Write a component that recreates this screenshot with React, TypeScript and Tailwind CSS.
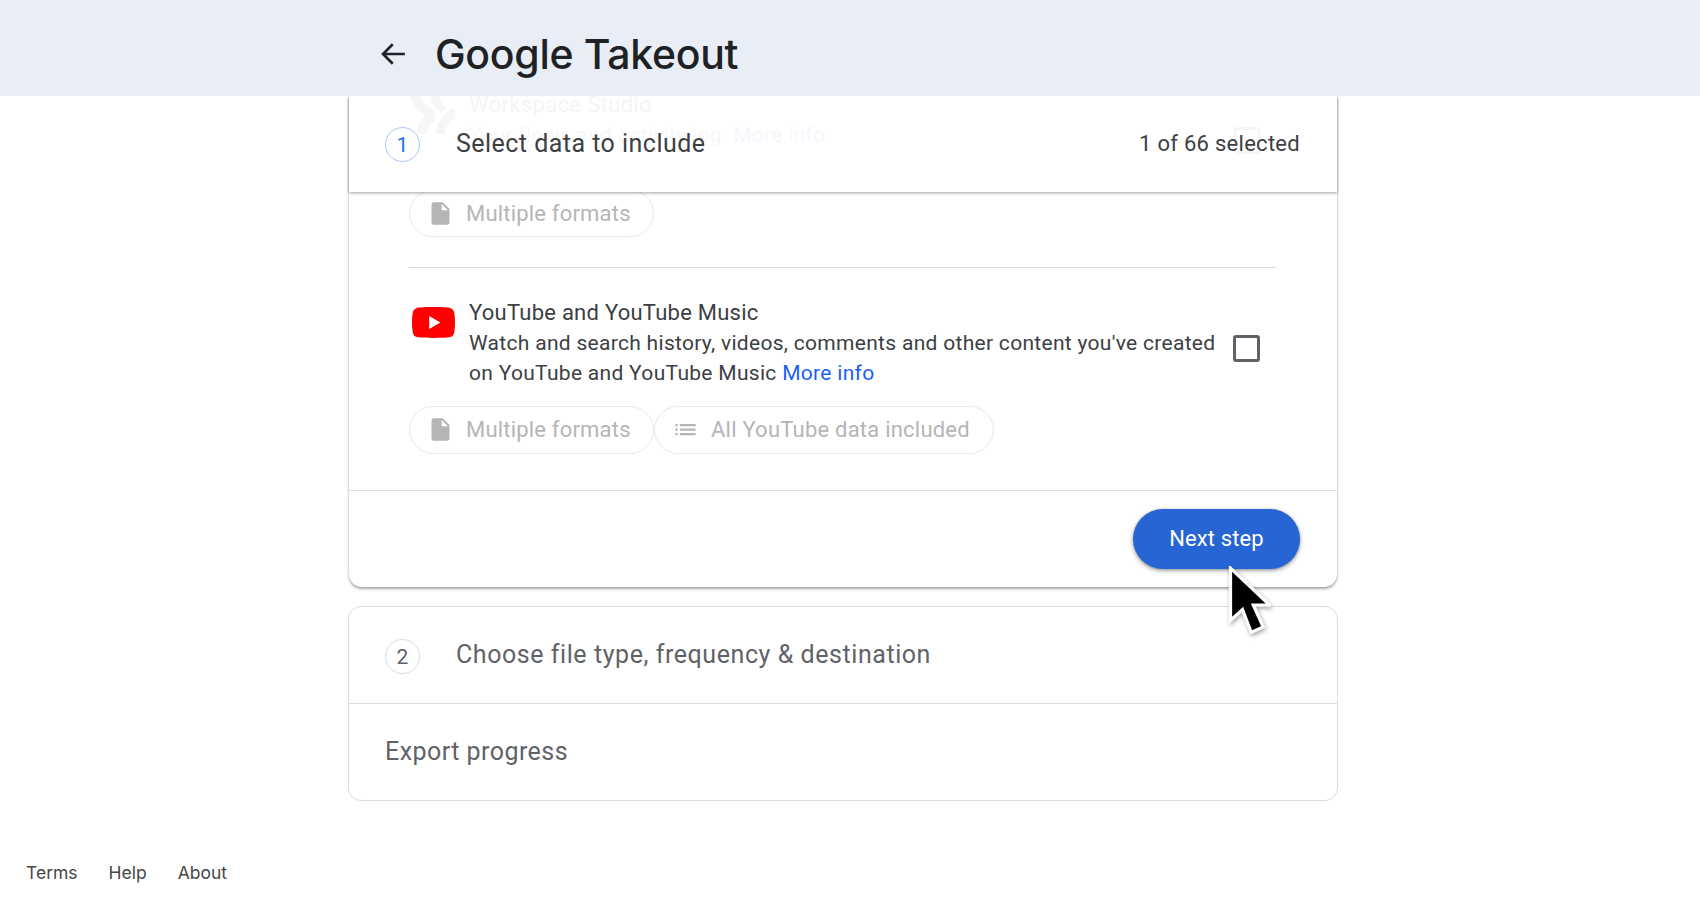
const FileIcon = () => (
  <svg viewBox="0 0 24 24" className="w-[27px] h-[27px] shrink-0" fill="#b4b5b7">
    <path d="M6 2c-1.1 0-1.99.9-1.99 2L4 20c0 1.1.89 2 1.99 2H18c1.1 0 2-.9 2-2V8l-6-6H6zm7 7V3.5L18.5 9H13z" />
  </svg>
);

const ListIcon = () => (
  <svg viewBox="0 0 24 24" className="w-[27px] h-[27px] shrink-0" fill="#b4b5b7">
    <path d="M3 13h2v-2H3v2zm0 4h2v-2H3v2zm0-8h2V7H3v2zm4 4h14v-2H7v2zm0 4h14v-2H7v2zM7 7v2h14V7H7z" />
  </svg>
);

export default function App() {
  return (
    <div className="min-h-[900px] bg-white font-['Roboto',sans-serif] relative overflow-hidden">
      <header className="h-24 bg-[#e8edf6] flex items-center pl-[378px] pt-3 relative z-20">
        <svg viewBox="0 0 24 24" className="w-[30px] h-[30px]" fill="none" stroke="#202124" strokeWidth="2.1">
          <path d="M21.500 12H4M11.800 4.200 4 12l7.800 7.800" />
        </svg>
        <h1 className="ml-[27px] text-[41px] leading-none font-['Inter',sans-serif] font-medium tracking-[-0.3px] text-[#202124]">Google Takeout</h1>
      </header>

      <main className="ml-[349px] w-[988px]">
        <section className="rounded-b-[13px] bg-white shadow-[0_2px_3px_rgba(60,64,67,0.4),0_1px_2px_rgba(60,64,67,0.15)]">
          <div className="relative z-10 h-24 flex items-center pl-[36px] pr-[37px] bg-white overflow-hidden shadow-[0_1px_3px_rgba(60,64,67,0.5)]">
            <div className="absolute left-[61px] top-0">
              <svg viewBox="0 0 45 38" className="w-[45px] h-[38px]" fill="#f6f6f6">
                <path d="M0 0h10c1 6 6 11 15 14l-5 7C9 18 2 10 0 0z" />
                <path d="M21 0h9c0 5 2 8 7 11l-6 6C25 13 21 7 21 0z" />
                <path d="M6 38C7 27 13 19 25 17l0 9c-5 1-7 5-8 12z" />
                <path d="M26 38C27 25 33 16 45 12l0 10c-6 2-9 8-10 16z" />
              </svg>
            </div>
            <div className="absolute left-[120px] top-[-1px] text-[22px] leading-[20px] tracking-[0.35px] text-[#f5f5f5] whitespace-nowrap">Workspace Studio</div>
            <div className="absolute left-[120px] top-[24px] text-[21px] leading-[30px] tracking-[0.3px] text-[#f7f7f7] whitespace-nowrap">Your flows and activity log. <span className="text-[#f5f7fe]">More info</span></div>
            <div className="absolute left-[885px] top-[31px] w-[27px] h-[27px] rounded-[3px] border-[3px] border-[#f6f6f6]" />
            <span className="relative w-[35px] h-[35px] rounded-full border border-[#a8c7fa] flex items-center justify-center text-[#1a73e8] text-[21px] pt-[4px]">1</span>
            <span className="relative ml-[36px] text-[25px] leading-[30px] tracking-[0.47px] text-[#3c4043]">Select data to include</span>
            <span className="relative ml-auto text-[22px] leading-[30px] tracking-[0.28px] text-[#3c4043]">1 of 66 selected</span>
          </div>

          <div className="-mt-[2px] pl-[60px] pr-[61px]">
            <div className="pb-[30px] border-b border-[#dadce0]">
              <span className="inline-flex items-center h-[47px] w-[245px] rounded-full border border-[#e8e9eb] pl-[17px] pb-[1px] gap-[12px] text-[22px] tracking-[0.2px] text-[#b4b5b7]">
                <FileIcon />
                Multiple formats
              </span>
            </div>

            <div className="flex mt-[30px]">
              <svg viewBox="0 0 24 18" preserveAspectRatio="none" className="w-[43px] h-[33px] ml-[3px] mt-[8px] shrink-0">
                <path fill="#ff0000" d="M23.5 3.2a3 3 0 0 0-2.1-2.1C19.5.6 12 .6 12 .6S4.500.6 2.600 1.100A3 3 0 0 0 .5 3.200 31 31 0 0 0 0 9a31 31 0 0 0 .5 5.800 3 3 0 0 0 2.100 2.100c1.900.5 9.400.5 9.400.5s7.500 0 9.400-.5a3 3 0 0 0 2.100-2.100A31 31 0 0 0 24 9a31 31 0 0 0-.5-5.800z" />
                <path fill="#ffffff" d="M9.600 12.600 15.800 9 9.600 5.400z" />
              </svg>
              <div className="ml-[14px] w-[750px] shrink-0 text-[#3c4043]">
                <div className="text-[22px] leading-[30px] tracking-[0.25px]">YouTube and YouTube Music</div>
                <p className="text-[21px] leading-[30px] tracking-[0.3px] whitespace-nowrap">
                  Watch and search history, videos, comments and other content you've created<br />
                  on YouTube and YouTube Music <span className="text-[#1a5ff0]">More info</span>
                </p>
              </div>
              <span className="ml-[14px] mt-[37px] w-[27px] h-[27px] rounded-[3px] border-[3px] border-[#5f6368] shrink-0" />
            </div>

            <div className="flex mt-[18px] pb-[36px]">
              <span className="inline-flex items-center h-[48px] w-[245px] rounded-full border border-[#e8e9eb] pl-[17px] pb-[1px] gap-[12px] text-[22px] tracking-[0.2px] text-[#b4b5b7]">
                <FileIcon />
                Multiple formats
              </span>
              <span className="inline-flex items-center h-[48px] w-[340px] rounded-full border border-[#e8e9eb] pl-[17px] pb-[1px] gap-[12px] text-[22px] tracking-[0.22px] text-[#b4b5b7]">
                <ListIcon />
                All YouTube data included
              </span>
            </div>
          </div>

          <div className="h-[97px] border-t border-[#dadce0] flex items-center justify-end pr-[37px]">
            <button className="w-[167px] h-[60px] rounded-full bg-[#2764d4] text-white text-[22px] tracking-[0.13px] pb-[1px] shadow-[0_1px_3px_rgba(60,64,67,0.45),0_2px_4px_1px_rgba(60,64,67,0.2)]">Next step</button>
          </div>
        </section>

        <section className="mt-[19px] -ml-[1px] w-[990px] rounded-[13px] border border-[#dadce0] bg-white text-[#5f6368]">
          <div className="h-[97px] flex items-center pl-[36px] border-b border-[#dadce0]">
            <span className="w-[35px] h-[35px] rounded-full border border-[#dadce0] flex items-center justify-center text-[21px] mt-[2px] pt-[4px]">2</span>
            <span className="ml-[36px] text-[25px] leading-[30px] tracking-[0.56px]">Choose file type, frequency &amp; destination</span>
          </div>
          <div className="h-[96px] flex items-center pl-[36px]">
            <span className="text-[25px] leading-[30px] tracking-[0.45px]">Export progress</span>
          </div>
        </section>
      </main>

      <footer className="mt-[59px] pl-[26px] flex gap-[31px] text-[17.5px] font-['Inter',sans-serif] text-[#444746]">
        <span>Terms</span>
        <span>Help</span>
        <span>About</span>
      </footer>

      <svg viewBox="0 0 40 68" className="absolute left-[1227px] top-[566px] w-[44px] h-[74px] z-30 drop-shadow-[1px_2px_2px_rgba(0,0,0,0.35)]">
        <path d="M3 2v48l11-10 8 21 11-5-9-20h15z" fill="#000000" stroke="#ffffff" strokeWidth="3" strokeLinejoin="miter" />
      </svg>
    </div>
  );
}
